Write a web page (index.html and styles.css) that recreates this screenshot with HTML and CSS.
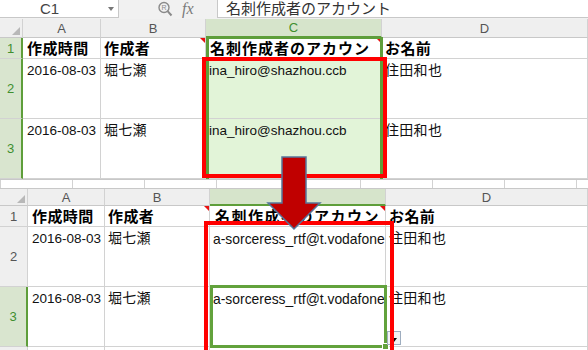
FILE: index.html
```html
<html>
    <head>
        <title>名刺作成者のアカウント</title>
        <link rel="stylesheet" href="styles.css">
    </head>
    <body>
        <div class="page">
            <div class="fbar">
                <div class="namebox"><span>C1</span><b class="caret"></b></div>
                <div class="tools">
                    <svg class="lens" width="16" height="16" viewBox="0 0 16 16">
                        <circle cx="7" cy="6.5" r="5" fill="none" stroke="#8a8a8a" stroke-width="1.4"/>
                        <line x1="10.6" y1="10.2" x2="14.5" y2="14.5" stroke="#8a8a8a" stroke-width="2"/>
                        <text x="7" y="9" font-size="7" font-family="Liberation Sans, sans-serif" fill="#8a8a8a" text-anchor="middle">R</text>
                    </svg>
                    <span class="fx">fx</span>
                </div>
                <div class="formula">名刺作成者のアカウント</div>
            </div>

            <div class="sheet sheet-top">
                <div class="hd corner"><i></i></div>
                <div class="hd">A</div>
                <div class="hd">B</div>
                <div class="hd sel">C</div>
                <div class="hd">D</div>

                <div class="rh sel">1</div>
                <div class="cell head">作成時間</div>
                <div class="cell head note">作成者</div>
                <div class="cell head wide note"><span>名刺作成者のアカウント</span></div>
                <div class="cell head">お名前</div>

                <div class="rh sel">2</div>
                <div class="cell">2016-08-03</div>
                <div class="cell jp">堀七瀬</div>
                <div class="cell fill">ina_hiro@shazhou.ccb</div>
                <div class="cell jp">住田和也</div>

                <div class="rh sel">3</div>
                <div class="cell">2016-08-03</div>
                <div class="cell jp">堀七瀬</div>
                <div class="cell fill">ina_hiro@shazhou.ccb</div>
                <div class="cell jp">住田和也</div>
            </div>

            <div class="strip"></div>

            <div class="sheet sheet-bottom">
                <div class="hd corner"><i></i></div>
                <div class="hd">A</div>
                <div class="hd">B</div>
                <div class="hd sel">C</div>
                <div class="hd">D</div>

                <div class="rh">1</div>
                <div class="cell head">作成時間</div>
                <div class="cell head note">作成者</div>
                <div class="cell head wide note"><span>名刺作成者のアカウント</span></div>
                <div class="cell head">お名前</div>

                <div class="rh">2</div>
                <div class="cell">2016-08-03</div>
                <div class="cell jp">堀七瀬</div>
                <div class="cell mail">a-sorceress_rtf@t.vodafone</div>
                <div class="cell jp">住田和也</div>

                <div class="rh sel">3</div>
                <div class="cell">2016-08-03</div>
                <div class="cell jp">堀七瀬</div>
                <div class="cell mail">a-sorceress_rtf@t.vodafone</div>
                <div class="cell jp">住田和也</div>

                <div class="rh"></div>
                <div class="cell"></div>
                <div class="cell"></div>
                <div class="cell"></div>
                <div class="cell"></div>
            </div>

            <!-- marks drawn over the two sheets -->
            <div class="selbox-top"></div>
            <div class="selbox-bottom"><i class="handle"></i></div>
            <div class="autofill"><b></b></div>
            <div class="redbox redbox-top"></div>
            <div class="redbox redbox-bottom"></div>
            <svg class="arrow" width="60" height="80" viewBox="0 0 60 80">
                <polygon points="18,3 42,3 42,49 56,49 30,75 4,49 18,49" fill="#c00000" stroke="#56759b" stroke-width="1.5"/>
            </svg>
        </div>
    </body>
</html>
```

FILE: styles.css
```css
body {
    margin: 0;
    background: #fff;
    font-family: "Liberation Sans", "Noto Sans CJK JP", sans-serif;
    color: #222;
}

.page {
    position: relative;
    width: 588px;
    height: 350px;
    overflow: hidden;
}

/* formula bar */

.fbar {
    display: flex;
    height: 19px;
    background: #f1f1f1;
}

.namebox {
    display: flex;
    align-items: center;
    width: 118px;
    height: 17px;
    background: #fff;
    border-right: 1px solid #c8c8c8;
    border-bottom: 1px solid #c8c8c8;
    font-size: 15px;
    color: #444;
}

.namebox span {
    padding-left: 40px;
    flex: 1;
}

.caret {
    border-left: 3px solid transparent;
    border-right: 3px solid transparent;
    border-top: 4px solid #777;
    margin-right: 4px;
}

.tools {
    display: flex;
    align-items: center;
    width: 98px;
    height: 17px;
}

.lens {
    margin-left: 38px;
}

.fx {
    margin-left: 9px;
    font-family: "Liberation Serif", serif;
    font-style: italic;
    font-size: 16px;
    color: #7a7a7a;
}

.formula {
    flex: 1;
    height: 17px;
    background: #fff;
    border-left: 1px solid #c8c8c8;
    border-bottom: 1px solid #c8c8c8;
    padding-left: 8px;
    font-family: "Noto Sans CJK JP", sans-serif;
    font-size: 15px;
    line-height: 16px;
    color: #333;
    white-space: nowrap;
}

/* sheets */

.sheet {
    display: grid;
}

.sheet-top {
    grid-template-columns: 23px 78px 105px 176px 1fr;
    grid-template-rows: 19px 21px 60px 60px;
}

.sheet-bottom {
    grid-template-columns: 28px 77px 105px 176px 1fr;
    grid-template-rows: 17px 21px 60px 60px 20px;
    border-top: 1px solid #c8c8c8;
}

.hd {
    display: flex;
    align-items: center;
    justify-content: center;
    background: #efefef;
    border-right: 1px solid #d2d2d2;
    border-bottom: 1px solid #c8c8c8;
    font-size: 13px;
    color: #555;
}

.hd.sel {
    background: #d6e4cb;
    color: #3f8f2f;
    border-bottom: 2px solid #5e9e3a;
}

.corner {
    align-items: flex-end;
    justify-content: flex-end;
    padding: 0 2px 2px 0;
}

.corner i {
    border-left: 8px solid transparent;
    border-bottom: 8px solid #b8b8b8;
}

.rh {
    display: flex;
    align-items: center;
    justify-content: center;
    background: #efefef;
    border-right: 1px solid #d2d2d2;
    border-bottom: 1px solid #d2d2d2;
    font-size: 13px;
    color: #555;
}

.rh.sel {
    background: #d9e5cf;
    color: #3f8f2f;
    border-right: 2px solid #5e9e3a;
}

.cell {
    position: relative;
    border-right: 1px solid #d2d2d2;
    border-bottom: 1px solid #d2d2d2;
    padding: 4px 0 0 3px;
    font-size: 13.5px;
    line-height: 16px;
    white-space: nowrap;
    overflow: hidden;
    color: #111;
}

.sheet-top .cell:nth-child(5n+2),
.sheet-bottom .cell:nth-child(5n+2) {
    padding-left: 4px;
}

.mail {
    font-size: 13.9px;
}

.jp {
    font-family: "Noto Sans CJK JP", sans-serif;
    font-size: 14px;
    line-height: 15px;
    padding-top: 3px;
    letter-spacing: 0.3px;
}

.head {
    display: flex;
    align-items: center;
    padding-top: 0;
    font-family: "Noto Sans CJK JP", sans-serif;
    font-weight: bold;
    font-size: 15px;
    letter-spacing: 0.4px;
    color: #000;
}

.head.wide span {
    display: block;
    width: 162px;
    overflow: hidden;
    letter-spacing: 1px;
}

.sheet-top .head.wide {
    padding-left: 4px;
}

.sheet-bottom .head.wide {
    padding-left: 5px;
}

.sheet-bottom .head.wide span {
    width: 166px;
    letter-spacing: 1.5px;
}

.note::after {
    content: "";
    position: absolute;
    top: 0;
    right: 0;
    border-left: 5px solid transparent;
    border-top: 5px solid #e81010;
}

.fill {
    background: #e2f4d8;
}

.strip {
    height: 8px;
    border-top: 1px solid #c8c8c8;
    background-image: linear-gradient(to right, #d2d2d2 1px, transparent 1px);
    background-size: 72px 100%;
}

/* overlays */

.selbox-top {
    position: absolute;
    left: 206px;
    top: 37px;
    width: 177px;
    height: 142px;
    box-sizing: border-box;
    border: 3px solid #5e9e3a;
    border-top-width: 2px;
    border-bottom: none;
}

.selbox-bottom {
    position: absolute;
    left: 210px;
    top: 285px;
    width: 177px;
    height: 63px;
    box-sizing: border-box;
    border: 3px solid #62a23c;
}

.handle {
    position: absolute;
    right: -5px;
    bottom: -5px;
    width: 5px;
    height: 5px;
    background: #62a23c;
    border: 1px solid #fff;
}

.autofill {
    position: absolute;
    left: 387px;
    top: 331px;
    width: 14px;
    height: 14px;
    box-sizing: border-box;
    background: #f2f2f2;
    border: 1px solid #9eadbf;
    display: flex;
    align-items: center;
    justify-content: center;
}

.autofill b {
    margin-top: 3px;
    border-left: 3px solid transparent;
    border-right: 3px solid transparent;
    border-top: 4px solid #000;
}

.redbox {
    position: absolute;
    box-sizing: border-box;
    border: 4px solid #ff0000;
}

.redbox-top {
    left: 202px;
    top: 57px;
    width: 185px;
    height: 121px;
}

.redbox-bottom {
    left: 204px;
    top: 221px;
    width: 190px;
    height: 160px;
}

.arrow {
    position: absolute;
    left: 264px;
    top: 154px;
}
```
